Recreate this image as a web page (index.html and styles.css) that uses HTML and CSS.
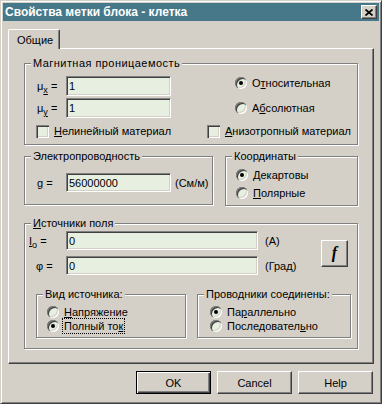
FILE: index.html
```html
<!DOCTYPE html>
<html lang="ru">
<head>
  <meta charset="UTF-8">
  <title>Свойства метки блока - клетка</title>
  <link rel="stylesheet" href="styles.css">
</head>
<body>

  <div class="window">

    <!-- Title bar -->
    <div class="titlebar">
      <span class="title">Свойства метки блока - клетка</span>
      <span class="close-btn">
        <svg width="8" height="7" viewBox="0 0 8 7"><path d="M0.5 0.5L7.5 6.5M7.5 0.5L0.5 6.5" stroke="#000" stroke-width="1.7"/></svg>
      </span>
    </div>

    <!-- Tabs -->
    <div class="tabs">
      <div class="tab">Общие</div>
    </div>

    <div class="panel">

      <!-- Magnetic permeability -->
      <fieldset class="group magnet">
        <legend class="wide">Магнитная проницаемость</legend>
        <div class="magnet-top">
          <div class="fields">
            <div class="field">
              <span class="lbl">μ<u class="sub">x</u> =</span>
              <input class="edit w105" type="text" value="1">
            </div>
            <div class="field">
              <span class="lbl">μ<u class="sub">y</u> =</span>
              <input class="edit w105" type="text" value="1">
            </div>
          </div>
          <div class="radio-col">
            <label class="opt"><span class="radio on"></span><span>О<u>т</u>носительная</span></label>
            <label class="opt"><span class="radio"></span><span>А<u>б</u>солютная</span></label>
          </div>
        </div>
        <div class="check-row">
          <label class="opt nonlin"><span class="check"></span><span><u>Н</u>елинейный материал</span></label>
          <label class="opt"><span class="check"></span><span><u>А</u>низотропный материал</span></label>
        </div>
      </fieldset>

      <div class="group-row">
        <!-- Conductivity -->
        <fieldset class="group cond">
          <legend>Электропроводность</legend>
          <div class="cond-body">
            <span class="lbl"><u>g</u> =</span>
            <input class="edit w105 h19" type="text" value="56000000">
            <span class="unit-cond">(См/м)</span>
          </div>
        </fieldset>

        <!-- Coordinates -->
        <fieldset class="group coord">
          <legend>Координаты</legend>
          <div class="coord-body">
            <label class="opt tall"><span class="radio on"></span><span><u>Д</u>екартовы</span></label>
            <label class="opt tall"><span class="radio"></span><span><u>П</u>олярные</span></label>
          </div>
        </fieldset>
      </div>

      <!-- Field sources -->
      <fieldset class="group src">
        <legend><u>И</u>сточники поля</legend>
        <div class="src-top">
          <div class="src-fields">
            <div class="field">
              <span class="lbl"><u>I</u><span class="sub">o</span> =</span>
              <input class="edit w192 h19" type="text" value="0">
              <span class="unit">(А)</span>
            </div>
            <div class="field">
              <span class="lbl lbl-phi">φ =</span>
              <input class="edit w192 h19" type="text" value="0">
              <span class="unit">(Град)</span>
            </div>
          </div>
          <button class="fbtn" type="button">f</button>
        </div>

        <div class="src-bottom">
          <fieldset class="group kind">
            <legend>Вид источника:</legend>
            <div class="sub-body">
              <label class="opt"><span class="radio"></span><span><u>Н</u>апряжение</span></label>
              <label class="opt"><span class="radio on"></span><span class="focus">Полный то<u>к</u></span></label>
            </div>
          </fieldset>
          <fieldset class="group wires">
            <legend>Проводники соединены:</legend>
            <div class="sub-body">
              <label class="opt"><span class="radio on"></span><span>Па<u>р</u>аллельно</span></label>
              <label class="opt"><span class="radio"></span><span>Последовател<u>ь</u>но</span></label>
            </div>
          </fieldset>
        </div>
      </fieldset>

    </div>

    <!-- Dialog buttons -->
    <div class="buttons">
      <button class="btn default" type="button">OK</button>
      <button class="btn" type="button">Cancel</button>
      <button class="btn" type="button">Help</button>
    </div>

  </div>

</body>
</html>
```

FILE: styles.css
```css
/* Classic dialog look */
* {
  box-sizing: border-box;
  margin: 0;
  padding: 0;
}

body {
  font-family: "Liberation Sans", Arial, sans-serif;
  font-size: 11px;
  line-height: 14px;
  color: #000;
  background-color: #d4d0c8;
}

.window {
  width: 382px;
  height: 404px;
  padding: 2px;
  background-color: #d4d0c8;
  border: 1px solid;
  border-color: #d4d0c8 #404040 #404040 #d4d0c8;
  box-shadow: inset 1px 1px 0 #fff, inset -1px -1px 0 #808080;
}

/* Title bar */
.titlebar {
  height: 18px;
  padding: 0 2px;
  display: flex;
  align-items: center;
  background-color: #46788a;
}

.title {
  flex: 1;
  color: #fff;
  font-size: 12px;
  font-weight: bold;
}

.close-btn {
  width: 16px;
  height: 14px;
  display: flex;
  align-items: center;
  justify-content: center;
  background-color: #d4d0c8;
  border: 1px solid;
  border-color: #fff #404040 #404040 #fff;
  box-shadow: inset -1px -1px 0 #808080;
}

/* Tabs */
.tabs {
  height: 19px;
  margin-top: 8px;
  padding-left: 5px;
  display: flex;
}

.tab {
  position: relative;
  width: 52px;
  height: 20px;
  padding: 2px 0 0 8px;
  line-height: 16px;
  background-color: #d4d0c8;
  border: 1px solid;
  border-bottom: none;
  border-color: #fff #404040 #d4d0c8 #fff;
  border-radius: 2px 2px 0 0;
  box-shadow: inset -1px 0 0 #808080;
}

.panel {
  height: 316px;
  margin: 0 5px;
  padding: 7px 0 0 15px;
  border: 1px solid;
  border-color: #fff #404040 #404040 #fff;
  box-shadow: inset -1px -1px 0 #808080;
}

/* Group boxes */
.group {
  min-width: 0;
  border: 1px solid #808080;
  box-shadow: 1px 1px 0 #fff, inset 1px 1px 0 #fff;
}

.group legend {
  margin-left: 6px;
  padding: 0 2px;
  line-height: 14px;
  background-color: #d4d0c8;
}

.group legend.wide {
  letter-spacing: 0.45px;
}

.magnet {
  width: 334px;
  height: 89px;
}

.magnet-top {
  display: flex;
  padding: 6px 0 0 12px;
}

.fields {
  display: flex;
  flex-direction: column;
  gap: 2px;
}

.field {
  display: flex;
  align-items: center;
}

.lbl {
  width: 29px;
  flex-shrink: 0;
}

.sub {
  font-size: 9px;
  vertical-align: -3px;
  line-height: 0;
}

.radio-col {
  margin-left: 64px;
  display: flex;
  flex-direction: column;
  gap: 11px;
}

.check-row {
  display: flex;
  padding: 6px 0 0 11px;
}

.nonlin {
  width: 171px;
}

/* Edit boxes */
.edit {
  height: 20px;
  padding: 0 2px;
  font: inherit;
  color: #000;
  background-color: #e6efe0;
  border: 1px solid;
  border-color: #808080 #fff #fff #808080;
  box-shadow: inset 1px 1px 0 #404040, inset -1px -1px 0 #d4d0c8;
  outline: none;
}

.w105 { width: 105px; }
.w192 { width: 192px; }
.h19 { height: 19px; }

/* Radio buttons and check boxes */
.opt {
  height: 14px;
  display: flex;
  align-items: center;
  gap: 5px;
  white-space: nowrap;
}

.opt.tall {
  height: 18px;
}

.radio {
  position: relative;
  width: 12px;
  height: 12px;
  flex-shrink: 0;
  border-radius: 50%;
  background-color: #e6efe0;
  box-shadow: inset 1px 1px 0 #808080, inset 2px 2px 0 #404040,
              inset -1px -1px 0 #fff, inset -2px -2px 0 #d4d0c8;
}

.radio.on::after {
  content: "";
  position: absolute;
  left: 4px;
  top: 4px;
  width: 4px;
  height: 4px;
  border-radius: 50%;
  background-color: #000;
}

.check {
  width: 13px;
  height: 13px;
  flex-shrink: 0;
  background-color: #e6efe0;
  box-shadow: inset 1px 1px 0 #808080, inset 2px 2px 0 #404040,
              inset -1px -1px 0 #fff, inset -2px -2px 0 #d4d0c8;
}

.focus {
  padding: 0 1px;
  margin-left: -1px;
  outline: 1px dotted #000;
}

/* Second row of groups */
.group-row {
  display: flex;
  gap: 12px;
  margin-top: 4px;
}

.cond {
  width: 189px;
  height: 56px;
}

.cond-body {
  display: flex;
  align-items: center;
  padding: 10px 0 0 12px;
}

.unit-cond {
  margin-left: 4px;
}

.coord {
  width: 133px;
  height: 57px;
}

.coord-body {
  padding: 3px 0 0 10px;
}

/* Field sources */
.src {
  width: 334px;
  height: 133px;
  margin-top: 10px;
}

.src-top {
  display: flex;
  align-items: center;
  padding: 1px 9px 0 4px;
}

.src-fields {
  display: flex;
  flex-direction: column;
  gap: 6px;
}

.src .lbl {
  width: 37px;
}

.src .lbl-phi {
  padding-left: 7px;
}

.unit {
  margin-left: 7px;
}

.fbtn {
  width: 27px;
  height: 27px;
  margin-left: auto;
  font-family: "Liberation Serif", serif;
  font-size: 16px;
  font-weight: bold;
  font-style: italic;
  background-color: #d4d0c8;
  border: 1px solid;
  border-color: #fff #404040 #404040 #fff;
  box-shadow: inset -1px -1px 0 #808080;
}

.src-bottom {
  display: flex;
  gap: 11px;
  padding: 12px 0 0 11px;
}

.kind {
  width: 150px;
  height: 51px;
}

.wires {
  width: 154px;
  height: 51px;
}

.sub-body {
  padding: 4px 0 0 10px;
}

.wires .sub-body {
  padding-left: 12px;
}

/* Dialog buttons */
.buttons {
  display: flex;
  justify-content: flex-end;
  gap: 6px;
  margin-top: 7px;
  padding-right: 6px;
}

.btn {
  width: 75px;
  height: 23px;
  font: inherit;
  color: #000;
  background-color: #d4d0c8;
  border: 1px solid;
  border-color: #fff #404040 #404040 #fff;
  box-shadow: inset -1px -1px 0 #808080;
}

.btn.default {
  border-color: #000;
  box-shadow: inset 1px 1px 0 #fff, inset -1px -1px 0 #404040, inset -2px -2px 0 #808080;
}
```
